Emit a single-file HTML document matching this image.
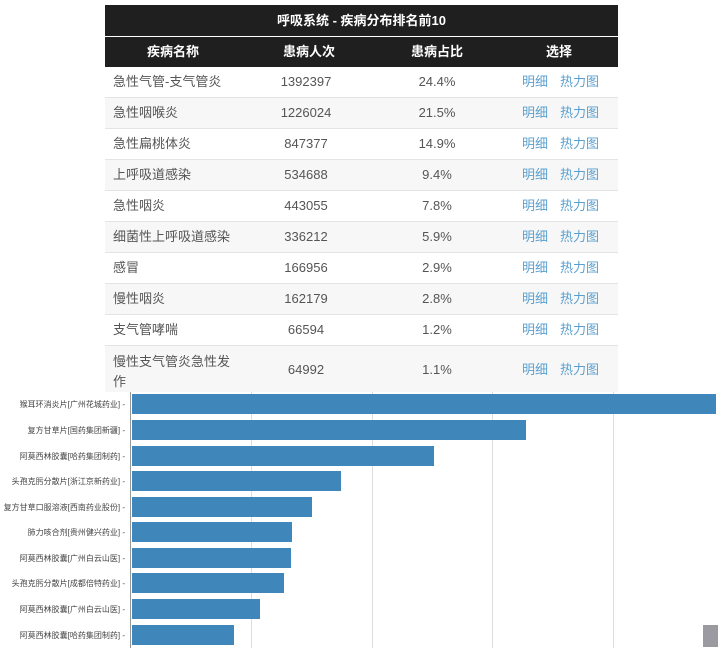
<!DOCTYPE html>
<html><head><meta charset="utf-8"><style>
body{margin:0;width:728px;height:660px;background:#fff;position:relative;overflow:hidden;font-family:"Liberation Sans","Noto Sans CJK SC",sans-serif;}
.t{position:absolute;left:105px;width:513px;}
.r{position:absolute;left:0;width:513px;font-size:13px;color:#555;border-bottom:1px solid #e4e4e4;}
.r span{position:absolute;}
.c1{left:8px}.c2{left:150px;width:102px;text-align:center}.c3{left:282px;width:100px;text-align:center}
.c4{left:417px;color:#5aa0cf}.c5{left:455px;color:#5aa0cf}
.h{background:#1f1f1f;color:#fff;font-weight:bold;position:absolute;left:105px;width:513px;font-size:13px}
.lbl{position:absolute;right:603px;font-size:8px;color:#444;white-space:nowrap;}
.bar{position:absolute;left:132px;height:20px;background:#3f86bb;}
.g{position:absolute;top:392px;height:256px;width:1px;background:#ddd;}
</style></head><body>
<div class="h" style="top:5px;height:31px;line-height:31px;text-align:center">呼吸系统 - 疾病分布排名前10</div>
<div class="h" style="top:37px;height:30px;line-height:30px">
<span style="position:absolute;left:42px">疾病名称</span><span style="position:absolute;left:178px">患病人次</span><span style="position:absolute;left:306px">患病占比</span><span style="position:absolute;left:441px">选择</span></div>
<div class="t" style="top:67px">
<div class="r" style="top:0;height:30px;line-height:30px"><span class="c1">急性气管-支气管炎</span><span class="c2">1392397</span><span class="c3">24.4%</span><span class="c4">明细</span><span class="c5">热力图</span></div>
<div class="r" style="top:31px;height:30px;line-height:30px;background:#f7f7f7"><span class="c1">急性咽喉炎</span><span class="c2">1226024</span><span class="c3">21.5%</span><span class="c4">明细</span><span class="c5">热力图</span></div>
<div class="r" style="top:62px;height:30px;line-height:30px"><span class="c1">急性扁桃体炎</span><span class="c2">847377</span><span class="c3">14.9%</span><span class="c4">明细</span><span class="c5">热力图</span></div>
<div class="r" style="top:93px;height:30px;line-height:30px;background:#f7f7f7"><span class="c1">上呼吸道感染</span><span class="c2">534688</span><span class="c3">9.4%</span><span class="c4">明细</span><span class="c5">热力图</span></div>
<div class="r" style="top:124px;height:30px;line-height:30px"><span class="c1">急性咽炎</span><span class="c2">443055</span><span class="c3">7.8%</span><span class="c4">明细</span><span class="c5">热力图</span></div>
<div class="r" style="top:155px;height:30px;line-height:30px;background:#f7f7f7"><span class="c1">细菌性上呼吸道感染</span><span class="c2">336212</span><span class="c3">5.9%</span><span class="c4">明细</span><span class="c5">热力图</span></div>
<div class="r" style="top:186px;height:30px;line-height:30px"><span class="c1">感冒</span><span class="c2">166956</span><span class="c3">2.9%</span><span class="c4">明细</span><span class="c5">热力图</span></div>
<div class="r" style="top:217px;height:30px;line-height:30px;background:#f7f7f7"><span class="c1">慢性咽炎</span><span class="c2">162179</span><span class="c3">2.8%</span><span class="c4">明细</span><span class="c5">热力图</span></div>
<div class="r" style="top:248px;height:30px;line-height:30px"><span class="c1">支气管哮喘</span><span class="c2">66594</span><span class="c3">1.2%</span><span class="c4">明细</span><span class="c5">热力图</span></div>
<div class="r" style="top:279px;height:48px;line-height:48px;background:#f7f7f7;border:none"><span class="c1" style="line-height:20px;top:6px">慢性支气管炎急性发<br>作</span><span class="c2">64992</span><span class="c3">1.1%</span><span class="c4">明细</span><span class="c5">热力图</span></div>
</div>
<div style="position:absolute;left:0;top:392px;width:728px;height:268px;background:#fff"></div>
<div class="g" style="left:251px"></div><div class="g" style="left:372px"></div><div class="g" style="left:492px"></div><div class="g" style="left:613px"></div>
<div style="position:absolute;left:130px;top:392px;width:1px;height:256px;background:#999"></div>
<div class="bar" style="top:394px;width:584px"></div>
<div class="bar" style="top:420px;width:394px"></div>
<div class="bar" style="top:446px;width:302px"></div>
<div class="bar" style="top:471px;width:209px"></div>
<div class="bar" style="top:497px;width:180px"></div>
<div class="bar" style="top:522px;width:160px"></div>
<div class="bar" style="top:548px;width:159px"></div>
<div class="bar" style="top:573px;width:152px"></div>
<div class="bar" style="top:599px;width:128px"></div>
<div class="bar" style="top:625px;width:102px"></div>
<div class="lbl" style="top:399px">猴耳环消炎片[广州花城药业] -</div>
<div class="lbl" style="top:425px">复方甘草片[国药集团新疆] -</div>
<div class="lbl" style="top:451px">阿莫西林胶囊[哈药集团制药] -</div>
<div class="lbl" style="top:476px">头孢克肟分散片[浙江京新药业] -</div>
<div class="lbl" style="top:502px">复方甘草口服溶液[西南药业股份] -</div>
<div class="lbl" style="top:527px">肺力咳合剂[贵州健兴药业] -</div>
<div class="lbl" style="top:553px">阿莫西林胶囊[广州白云山医] -</div>
<div class="lbl" style="top:578px">头孢克肟分散片[成都倍特药业] -</div>
<div class="lbl" style="top:604px">阿莫西林胶囊[广州白云山医] -</div>
<div class="lbl" style="top:630px">阿莫西林胶囊[哈药集团制药] -</div>
<div style="position:absolute;left:703px;top:625px;width:15px;height:22px;background:#9a9aa0"></div>
</body></html>
